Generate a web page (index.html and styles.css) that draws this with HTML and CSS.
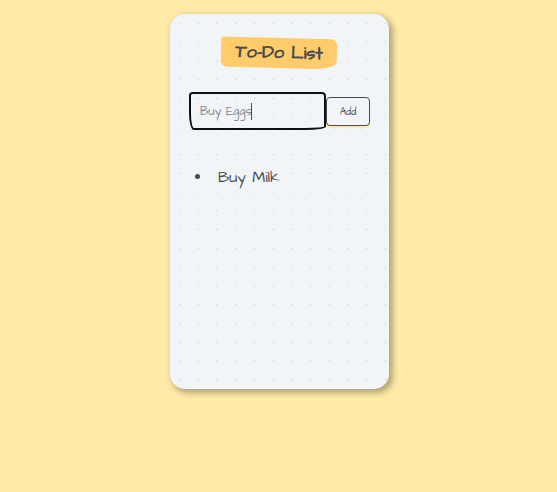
FILE: index.html
```html
<!DOCTYPE html>
<html lang="en">
<head>
<meta charset="utf-8">
<title>To-Do List</title>
<link rel="stylesheet" href="styles.css">
</head>
<body>
<main class="card">
  <h1 class="title"><span class="title-text">To-Do List</span></h1>
  <form class="form">
    <div class="field"><span class="field-text">Buy Eggs</span><span class="caret"></span></div>
    <button class="add" type="button"><span class="add-text">Add</span></button>
  </form>
  <ul class="list">
    <li class="item"><span class="item-text">Buy Milk</span></li>
  </ul>
</main>
</body>
</html>
```
FILE: styles.css
```css
* { box-sizing: border-box; }

body {
  margin: 0;
  min-height: 492px;
  padding-top: 14px;
  padding-left: 170px;
  background: #ffeaa7;
  color: #494a4b;
  font-family: "Architects Daughter", "Open Sans", sans-serif;
}

.card {
  width: 219px;
  height: 375px;
  padding: 23.5px 19px 0;
  border-radius: 15px;
  background: radial-gradient(#bfc0c1 7.2%, transparent 0) 0 0 / 18.75px 18.75px #f1f5f8;
  box-shadow: 3px 3px 6px 1px rgba(0, 0, 0, 0.3);
}

.title {
  display: flex;
  align-items: center;
  justify-content: center;
  width: 116px;
  height: 30px;
  margin: 0 0 0 32px;
  border-radius: 3% 5% 20% 5% / 5% 20% 25% 20%;
  background: #ffcb6b;
  transform: rotate(1.5deg);
  font-size: 18px;
  font-weight: 700;
  line-height: 30px;
  white-space: nowrap;
}

.form {
  display: flex;
  align-items: center;
  height: 38px;
  margin: 24.5px 0 0;
}

.field {
  display: flex;
  flex: none;
  align-items: center;
  width: 137px;
  height: 38px;
  padding-left: 9px;
  border: 2px solid #101010;
  border-radius: 3% 3% 15% 3.5% / 9% 10% 9% 45%;
  color: #858789;
  font-size: 12px;
  font-weight: 400;
  white-space: nowrap;
}

.caret {
  width: 1px;
  height: 17px;
  margin-left: -1px;
  background: #494a4b;
}

.add {
  flex: none;
  width: 44px;
  height: 29px;
  margin-left: 0;
  padding: 2px 0 0;
  border: 1px solid #494a4b;
  border-radius: 4px;
  background: #f1f5f8;
  box-shadow: 0 2px 0 #ffeaa7;
  color: #494a4b;
  font: 400 10px/25px "Architects Daughter", "Open Sans", sans-serif;
}

.list {
  margin: 35px 0 0;
  padding: 0;
  list-style: none;
}

.item {
  display: flex;
  align-items: center;
  gap: 18px;
  height: 24px;
  padding-left: 6px;
  font-size: 15.75px;
  font-weight: 400;
  white-space: nowrap;
}

.item::before {
  content: "";
  width: 5px;
  height: 5px;
  margin-bottom: 2px;
  border-radius: 50%;
  background: #494a4b;
}
```
